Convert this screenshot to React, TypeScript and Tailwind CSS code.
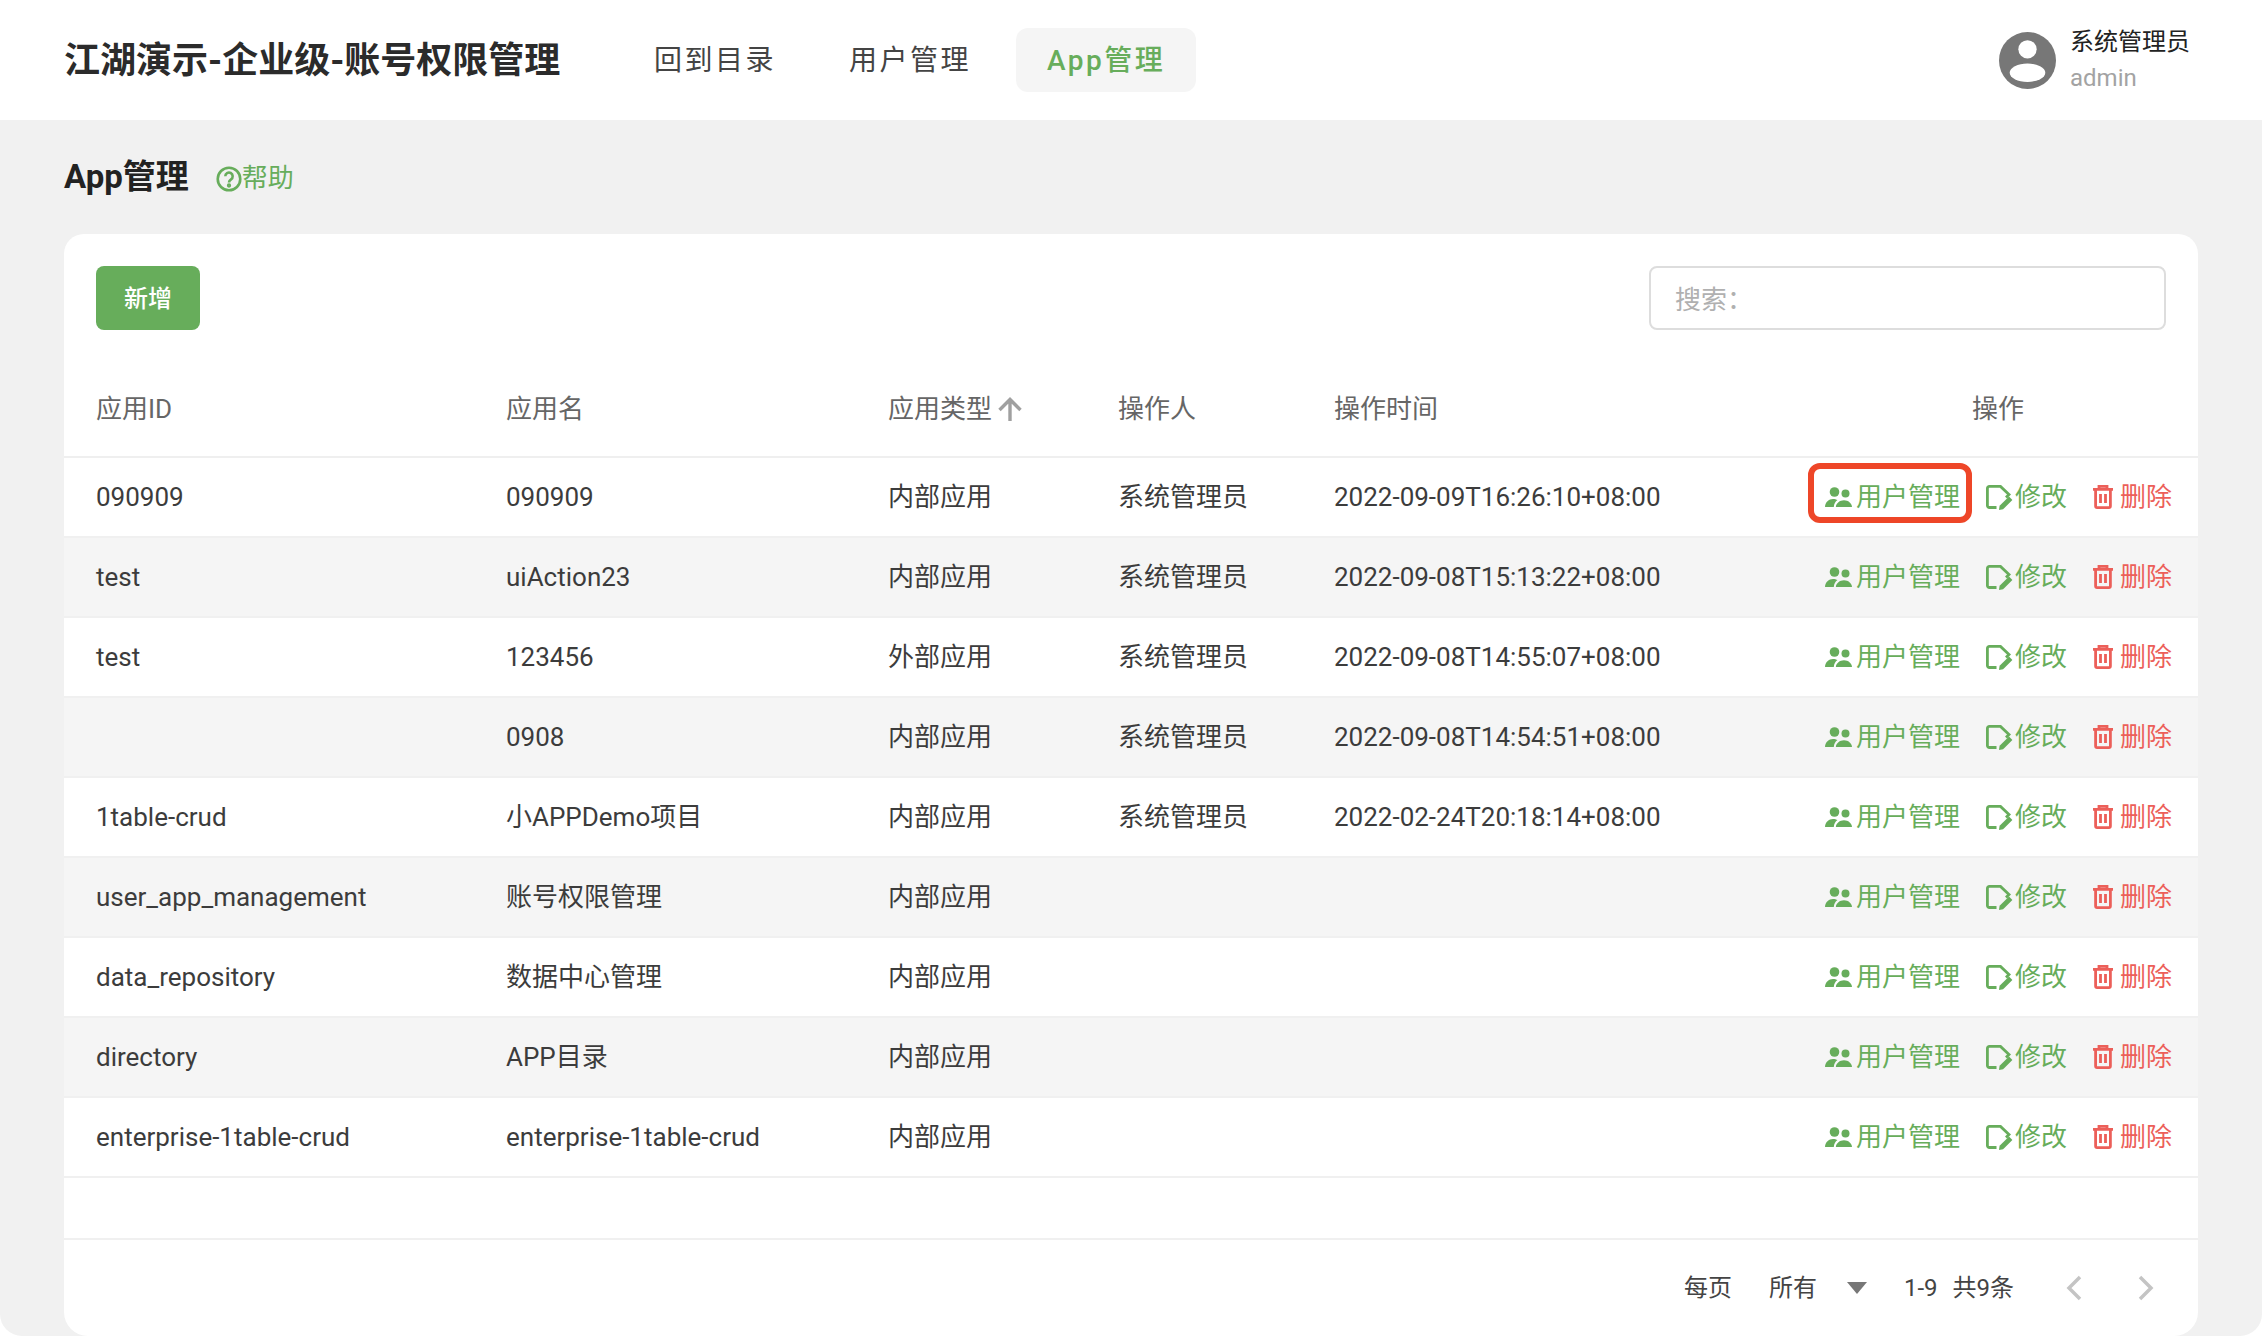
import React from "react";

const rows = [
  ["090909", "090909", "内部应用", "系统管理员", "2022-09-09T16:26:10+08:00"],
  ["test", "uiAction23", "内部应用", "系统管理员", "2022-09-08T15:13:22+08:00"],
  ["test", "123456", "外部应用", "系统管理员", "2022-09-08T14:55:07+08:00"],
  ["", "0908", "内部应用", "系统管理员", "2022-09-08T14:54:51+08:00"],
  ["1table-crud", "小APPDemo项目", "内部应用", "系统管理员", "2022-02-24T20:18:14+08:00"],
  ["user_app_management", "账号权限管理", "内部应用", "", ""],
  ["data_repository", "数据中心管理", "内部应用", "", ""],
  ["directory", "APP目录", "内部应用", "", ""],
  ["enterprise-1table-crud", "enterprise-1table-crud", "内部应用", "", ""],
];

function UsersIcon() {
  return (
    <svg viewBox="0 0 27 20" className="w-[27px] h-[20px] shrink-0" fill="currentColor">
      <circle cx="9.500" cy="5" r="4.800" />
      <circle cx="20.500" cy="6.500" r="4" />
      <path d="M0 20c.2-5 3.800-8 8-8 1.800 0 3.200.4 4.500 1.100-2.200 1.500-3.500 3.900-3.700 6.900H0z" />
      <path d="M10.800 20c.3-4 4-6.800 8.200-6.800s7.700 2.800 8 6.800H10.800z" />
    </svg>
  );
}

function EditIcon() {
  return (
    <svg viewBox="0 0 29 25" className="w-[29px] h-[25px] shrink-0" fill="none" stroke="currentColor" strokeWidth="2.800">
      <path d="M10.500 22.500H3.400A2 2 0 0 1 1.400 20.500V3.400A2 2 0 0 1 3.400 1.400H14.500L23 9.500L20 12.500" />
      <path d="M13 25l.6-4.200L23 11.500l3.400 3.400-9.300 9.300z" fill="currentColor" stroke="none" />
    </svg>
  );
}

function TrashIcon() {
  return (
    <svg viewBox="0 0 20 24" className="w-[20px] h-[24px] shrink-0" fill="none" stroke="currentColor" strokeWidth="2.800">
      <path d="M0 4.400h20M6 4.400V1.400h8v3" />
      <path d="M2.600 4.400v16.800a1.500 1.500 0 0 0 1.500 1.400h11.800a1.500 1.500 0 0 0 1.500-1.400V4.400" />
      <path d="M7.500 9v9M12.500 9v9" />
    </svg>
  );
}

function Actions({ highlight }: { highlight: boolean }) {
  return (
    <div className="flex items-center justify-end text-[#67ad5b] pr-[26px]">
      <span className="relative flex items-center">
        <UsersIcon />
        <span className="ml-[4px]">用户管理</span>
        {highlight && (
          <span className="absolute left-[-17px] right-[-12px] top-[-15px] bottom-[-6px] border-[6px] border-[#ee4628] rounded-[12px]" />
        )}
      </span>
      <span className="flex items-center ml-[26px]">
        <EditIcon />
        <span>修改</span>
      </span>
      <span className="flex items-center ml-[26px] text-[#ec5f59]">
        <TrashIcon />
        <span className="ml-[7px]">删除</span>
      </span>
    </div>
  );
}

const gridCols = "grid grid-cols-[410px_382px_230px_216px_1fr_auto] items-center pl-8";

export default function App() {
  return (
    <div
      className="w-[2262px] h-[1336px] overflow-hidden bg-[#f1f1f1] rounded-b-[22px] flex flex-col text-[26px] text-[#3c3c3c]"
      style={{ fontFamily: 'Roboto, "Noto Sans CJK SC", sans-serif' }}
    >
      <header className="h-[120px] bg-white shrink-0 flex items-center pl-16 pr-[72px]">
        <h1 className="text-[36px] font-bold text-[#2b2b2b] w-[568px] pt-[2px]">江湖演示-企业级-账号权限管理</h1>
        <nav className="flex items-center text-[28px] tracking-[2.500px] text-[#444444] pt-[2px]">
          <a className="h-16 px-[22px] flex items-center">回到目录</a>
          <a className="h-16 px-[22px] ml-[29px] flex items-center">用户管理</a>
          <a className="h-16 w-[180px] justify-center ml-[23px] flex items-center bg-[#f5f5f5] rounded-xl text-[#67ad5b] font-medium -mt-[2px] pt-[2px]">App管理</a>
        </nav>
        <div className="ml-auto flex items-center">
          <svg viewBox="0 0 56 56" className="w-[57px] h-[57px]">
            <circle cx="28" cy="28" r="28" fill="#777777" />
            <circle cx="28" cy="17" r="9" fill="#ffffff" />
            <ellipse cx="28" cy="40" rx="17.500" ry="9" fill="#ffffff" />
          </svg>
          <div className="ml-[14px] flex flex-col">
            <span className="text-[24px] leading-[36px] text-[#222222]">系统管理员</span>
            <span className="text-[24px] leading-[36px] text-[#a3a3a3]">admin</span>
          </div>
        </div>
      </header>

      <main className="flex-1 flex flex-col px-16 min-h-0">
        <div className="h-[114px] shrink-0 flex items-center">
          <h2 className="text-[33px] font-bold text-[#222222]">App管理</h2>
          <span className="ml-[27px] mt-[3px] flex items-center text-[#67ad5b] text-[26px]">
            <svg viewBox="0 0 24 24" className="w-[26px] h-[26px]" fill="none" stroke="currentColor" strokeWidth="2.400">
              <circle cx="12" cy="12" r="10.400" />
              <path d="M8.600 9.500a3.400 3.400 0 1 1 5.300 2.800c-1.300.9-1.900 1.500-1.900 2.900" />
              <circle cx="12" cy="18" r="0.800" fill="currentColor" />
            </svg>
            帮助
          </span>
        </div>

        <section className="flex-1 bg-white rounded-t-[20px] rounded-b-[24px] flex flex-col min-h-0">
          <div className="h-[136px] shrink-0 flex items-start justify-between pt-8 px-8">
            <button className="w-[104px] h-16 bg-[#67ad5b] rounded-lg text-white text-[24px] font-medium pt-[2px]">新增</button>
            <div className="w-[517px] h-16 border-2 border-[#dddddd] rounded-lg flex items-center px-6 pt-[4px] text-[#b0b0b0]">搜索：</div>
          </div>

          <div className={`${gridCols} h-[88px] shrink-0 border-b-2 border-[#efefef] text-[#666666] pb-[8px]`}>
            <span>应用ID</span>
            <span>应用名</span>
            <span className="flex items-center">
              应用类型
              <svg viewBox="0 0 24 24" className="w-[24px] h-[24px] ml-[6px]" fill="none" stroke="#a0a0a0" strokeWidth="3.400">
                <path d="M12 24V3M1.500 13L12 2.500 22.500 13" />
              </svg>
            </span>
            <span>操作人</span>
            <span>操作时间</span>
            <span className="w-[254px] pl-[28px]">操作</span>
          </div>

          <div className="h-[720px] shrink-0">
            {rows.map((r, i) => (
              <div
                key={i}
                className={`${gridCols} h-[80px] border-b-2 border-[#f0f0f0] ${i % 2 === 1 ? "bg-[#f5f5f5]" : "bg-white"}`}
              >
                {r.map((c, j) => (
                  <span key={j}>{c}</span>
                ))}
                <Actions highlight={i === 0} />
              </div>
            ))}
          </div>

          <div className="flex-1 flex flex-col justify-end">
            <div className="h-[98px] border-t-2 border-[#f0f0f0] flex items-center justify-end text-[24px] text-[#444444] pr-[44px]">
              <span>每页</span>
              <span className="ml-[37px]">所有</span>
              <svg viewBox="0 0 20 12" className="w-[20px] h-[12px] ml-[30px]" fill="#777777">
                <path d="M0 0h20L10 12z" />
              </svg>
              <span className="ml-[37px]">1-9</span>
              <span className="ml-[15px]">共9条</span>
              <svg viewBox="0 0 16 26" className="w-[16px] h-[26px] ml-[52px]" fill="none" stroke="#c4c4c4" strokeWidth="3.500">
                <path d="M14 2L3 13l11 11" />
              </svg>
              <svg viewBox="0 0 16 26" className="w-[16px] h-[26px] ml-[56px]" fill="none" stroke="#c4c4c4" strokeWidth="3.500">
                <path d="M2 2l11 11L2 24" />
              </svg>
            </div>
          </div>
        </section>
      </main>
    </div>
  );
}
